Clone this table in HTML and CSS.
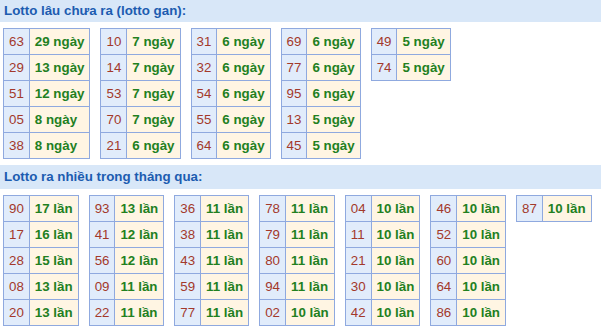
FILE: index.html
```html
<!DOCTYPE html>
<html lang="vi">
<head>
<meta charset="utf-8">
<title>Lotto</title>
<link rel="stylesheet" href="styles.css">
</head>
<body>
<div class="heading heading-first">Lotto lâu chưa ra (lotto gan):</div>
<div class="group">
  <table class="lt"><tr><td class="n">63</td><td class="v">29 ngày</td></tr><tr><td class="n">29</td><td class="v">13 ngày</td></tr><tr><td class="n">51</td><td class="v">12 ngày</td></tr><tr><td class="n">05</td><td class="v">8 ngày</td></tr><tr><td class="n">38</td><td class="v">8 ngày</td></tr></table>
  <table class="lt"><tr><td class="n">10</td><td class="v">7 ngày</td></tr><tr><td class="n">14</td><td class="v">7 ngày</td></tr><tr><td class="n">53</td><td class="v">7 ngày</td></tr><tr><td class="n">70</td><td class="v">7 ngày</td></tr><tr><td class="n">21</td><td class="v">6 ngày</td></tr></table>
  <table class="lt"><tr><td class="n">31</td><td class="v">6 ngày</td></tr><tr><td class="n">32</td><td class="v">6 ngày</td></tr><tr><td class="n">54</td><td class="v">6 ngày</td></tr><tr><td class="n">55</td><td class="v">6 ngày</td></tr><tr><td class="n">64</td><td class="v">6 ngày</td></tr></table>
  <table class="lt"><tr><td class="n">69</td><td class="v">6 ngày</td></tr><tr><td class="n">77</td><td class="v">6 ngày</td></tr><tr><td class="n">95</td><td class="v">6 ngày</td></tr><tr><td class="n">13</td><td class="v">5 ngày</td></tr><tr><td class="n">45</td><td class="v">5 ngày</td></tr></table>
  <table class="lt"><tr><td class="n">49</td><td class="v">5 ngày</td></tr><tr><td class="n">74</td><td class="v">5 ngày</td></tr></table>
</div>
<div class="heading">Lotto ra nhiều trong tháng qua:</div>
<div class="group">
  <table class="lt"><tr><td class="n">90</td><td class="v">17 lần</td></tr><tr><td class="n">17</td><td class="v">16 lần</td></tr><tr><td class="n">28</td><td class="v">15 lần</td></tr><tr><td class="n">08</td><td class="v">13 lần</td></tr><tr><td class="n">20</td><td class="v">13 lần</td></tr></table>
  <table class="lt"><tr><td class="n">93</td><td class="v">13 lần</td></tr><tr><td class="n">41</td><td class="v">12 lần</td></tr><tr><td class="n">56</td><td class="v">12 lần</td></tr><tr><td class="n">09</td><td class="v">11 lần</td></tr><tr><td class="n">22</td><td class="v">11 lần</td></tr></table>
  <table class="lt"><tr><td class="n">36</td><td class="v">11 lần</td></tr><tr><td class="n">38</td><td class="v">11 lần</td></tr><tr><td class="n">43</td><td class="v">11 lần</td></tr><tr><td class="n">59</td><td class="v">11 lần</td></tr><tr><td class="n">77</td><td class="v">11 lần</td></tr></table>
  <table class="lt"><tr><td class="n">78</td><td class="v">11 lần</td></tr><tr><td class="n">79</td><td class="v">11 lần</td></tr><tr><td class="n">80</td><td class="v">11 lần</td></tr><tr><td class="n">94</td><td class="v">11 lần</td></tr><tr><td class="n">02</td><td class="v">10 lần</td></tr></table>
  <table class="lt"><tr><td class="n">04</td><td class="v">10 lần</td></tr><tr><td class="n">11</td><td class="v">10 lần</td></tr><tr><td class="n">21</td><td class="v">10 lần</td></tr><tr><td class="n">30</td><td class="v">10 lần</td></tr><tr><td class="n">42</td><td class="v">10 lần</td></tr></table>
  <table class="lt"><tr><td class="n">46</td><td class="v">10 lần</td></tr><tr><td class="n">52</td><td class="v">10 lần</td></tr><tr><td class="n">60</td><td class="v">10 lần</td></tr><tr><td class="n">64</td><td class="v">10 lần</td></tr><tr><td class="n">86</td><td class="v">10 lần</td></tr></table>
  <table class="lt"><tr><td class="n">87</td><td class="v">10 lần</td></tr></table>
</div>
</body>
</html>
```
FILE: styles.css
```css
html, body {
  margin: 0;
  padding: 0;
  background: #ffffff;
  font-family: "Liberation Sans", Arial, sans-serif;
}
.heading {
  background: #d8e7f8;
  color: #1c5cb0;
  font-weight: bold;
  font-size: 10pt;
  height: 24px;
  line-height: 24px;
  padding-left: 4px;
}
.heading-first {
  height: 22px;
  line-height: 22px;
}
.group {
  display: flex;
  align-items: flex-start;
  gap: 10px;
  padding: 6px 0 6px 3px;
}
.lt {
  border-collapse: collapse;
  font-size: 10pt;
}
.lt td {
  border: 1px solid #8fa9df;
  height: 25px;
  padding: 0 5px;
  white-space: nowrap;
}
.lt .n {
  background: #e1ecfb;
  color: #a3392b;
}
.lt .v {
  background: #fff5e3;
  color: #22801f;
  font-weight: bold;
}
```
